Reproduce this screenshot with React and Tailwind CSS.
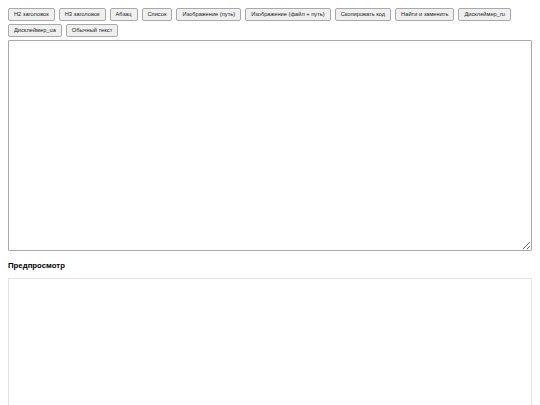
import React from 'react';

const buttons = [
  'H2 заголовок',
  'H3 заголовок',
  'Абзац',
  'Список',
  'Изображение (путь)',
  'Изображение (файл + путь)',
  'Скопировать код',
  'Найти и заменить',
  'Дисклеймер_ru',
  'Дисклеймер_ua',
  'Обычный текст',
];

export default function App() {
  return (
    <div className="h-[405px] overflow-hidden bg-white p-2 font-['Liberation_Sans',Arial,sans-serif] text-black">
      {/* toolbar */}
      <div className="flex flex-wrap gap-x-[4px] gap-y-[3px]">
        {buttons.map((b) => (
          <button
            key={b}
            className="h-[13px] px-[5px] text-[5.7px] leading-none bg-[#efefef] border border-[#a9a9a9] rounded-[2px] text-[#222]"
          >
            {b}
          </button>
        ))}
      </div>

      <textarea className="block mt-[3px] w-[524px] h-[211px] border border-[#a9a9a9] rounded-[1px] bg-white resize-y" />

      <h3 className="mt-[10px] mb-[7px] text-[7.8px] font-bold leading-[10px]">Предпросмотр</h3>

      <div className="w-[524px] h-[140px] border border-[#e3e3e3] bg-white" />
    </div>
  );
}
